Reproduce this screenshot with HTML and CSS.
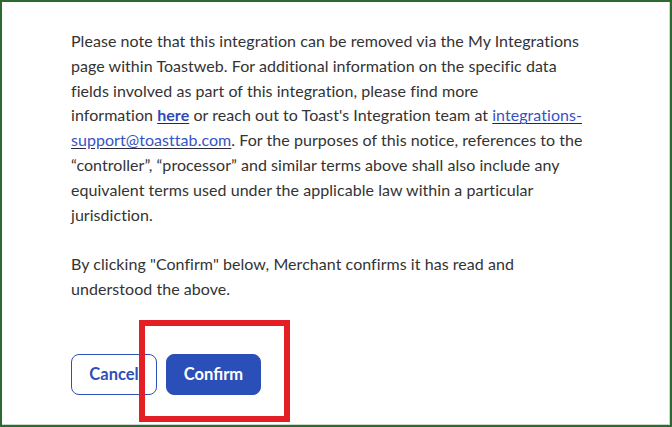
FILE: index.html
```html
<!DOCTYPE html>
<html>
<head>
<meta charset="utf-8">
<link rel="stylesheet" href="styles.css">
</head>
<body>
<div class="frame">
  <div class="content">
    <p class="para">Please note that this integration can be removed via the My Integrations page within Toastweb. For additional information on the specific data fields involved as part of this integration, please find more<br>information <a class="link strong" href="#">here</a> or reach out to Toast's Integration team at <a class="link" href="#">integrations-support@toasttab.com</a>. For the purposes of this notice, references to the “controller”, “processor” and similar terms above shall also include any equivalent terms used under the applicable law within a particular jurisdiction.</p>
    <p class="para">By clicking "Confirm" below, Merchant confirms it has read and understood the above.</p>
    <div class="actions">
      <button class="btn btn-secondary">Cancel</button>
      <button class="btn btn-primary">Confirm</button>
    </div>
  </div>
  <div class="highlight"></div>
</div>
</body>
</html>
```
FILE: styles.css
```css
html, body {
  margin: 0;
  padding: 0;
  background: #ffffff;
}
.frame {
  position: relative;
  box-sizing: border-box;
  width: 672px;
  height: 427px;
  border: 2px solid #2d6a2f;
  box-shadow: inset -1px -1px 0 #cfd8cf;
  overflow: hidden;
}
.content {
  padding: 27px 0 0 69px;
  width: 522px;
  font-family: Lato, "Source Sans Pro", "Open Sans", sans-serif;
  font-size: 16px;
  line-height: 24.8px;
  letter-spacing: 0.05px;
  color: #333333;
}
.para {
  margin: 0 0 25px 0;
}
.link {
  color: #3553c4;
  text-decoration: underline;
  text-decoration-color: #2a2a3a;
  text-underline-offset: 2px;
}
.strong {
  font-weight: 700;
  color: #2f49b8;
}
.actions {
  display: flex;
  gap: 9px;
  margin-top: 52px;
}
.btn {
  box-sizing: border-box;
  height: 41px;
  border-radius: 8px;
  font-family: Lato, "Source Sans Pro", sans-serif;
  font-size: 16.5px;
  font-weight: 700;
  cursor: pointer;
}
.btn-secondary {
  width: 86px;
  background: #ffffff;
  border: 1.5px solid #2f4fb8;
  color: #2f4fb8;
}
.btn-primary {
  width: 95px;
  background: #2b4fb8;
  border: 1.5px solid #2b4fb8;
  color: #ffffff;
}
.highlight {
  position: absolute;
  left: 137px;
  top: 318px;
  width: 151px;
  height: 102px;
  box-sizing: border-box;
  border: 6px solid #e31e24;
}
```
